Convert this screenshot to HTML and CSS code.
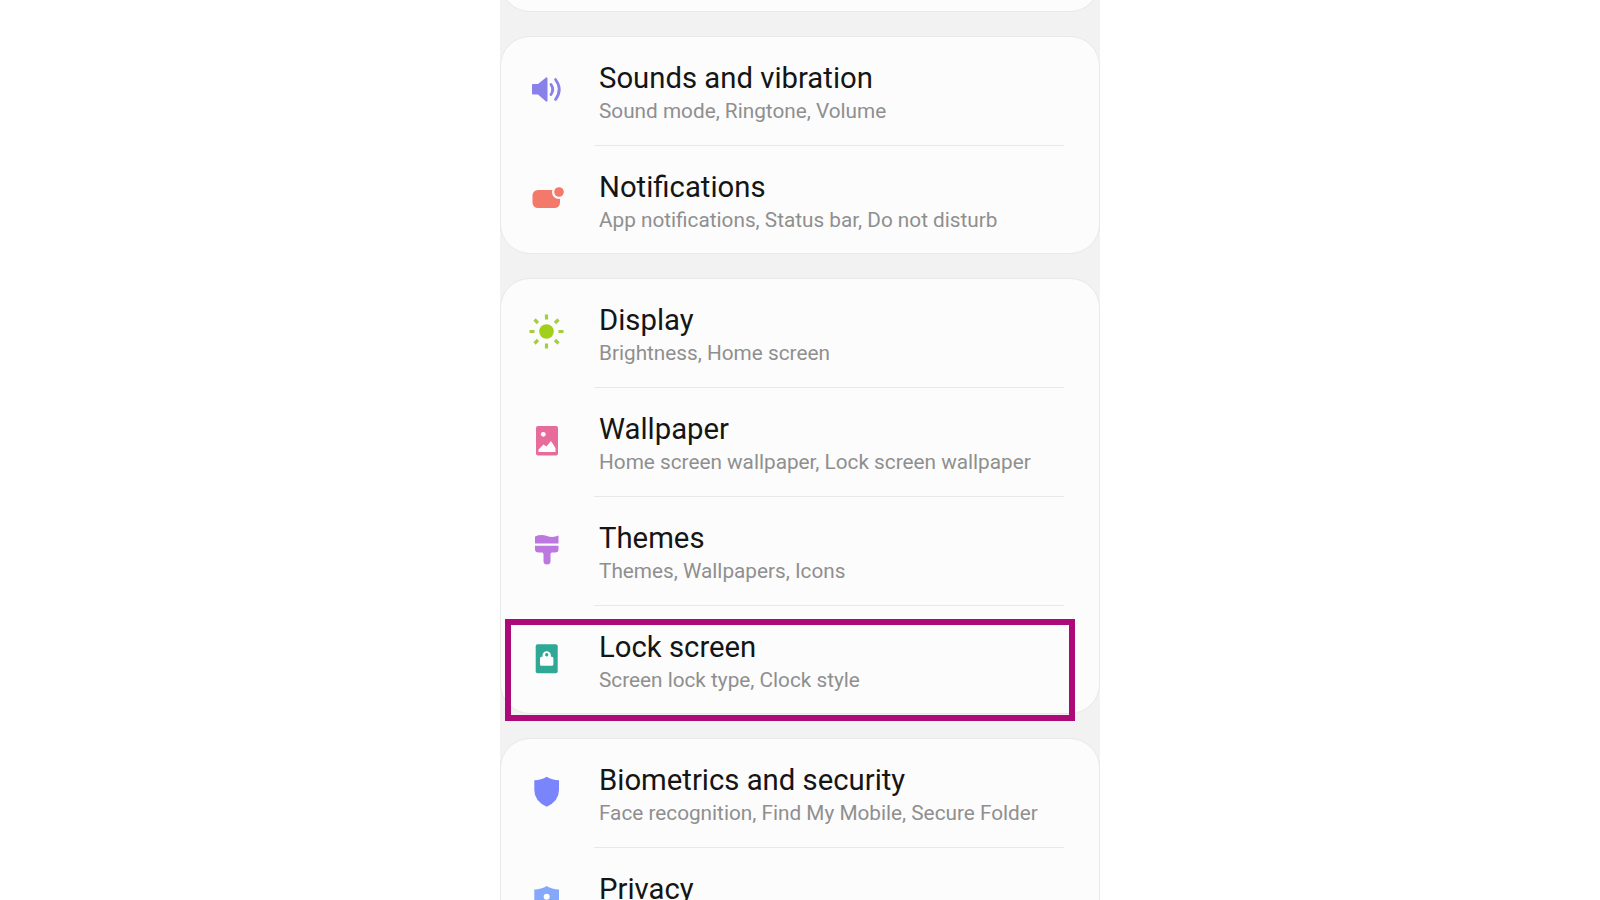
FILE: index.html
```html
<!DOCTYPE html>
<html lang="en">
<head>
<meta charset="utf-8">
<title>Settings</title>
<link rel="stylesheet" href="styles.css">
</head>
<body>
<main class="phone">
  <div class="card card-stub"></div>

  <section class="card">
    <div class="row">
      <svg class="icon" viewBox="0 0 40 40"><path class="sound" d="M6 17a1 1 0 0 1 1-1H12L20 9.500a1 1 0 0 1 1.500 1V32.500a1 1 0 0 1-1.500 1L12 26.500H7a1 1 0 0 1-1-1z"/><path class="wave" d="M25 16.500Q28.500 21.500 25 26.500M29.500 11.500Q37 21.500 29.500 31.500"/></svg>
      <div class="text"><div class="title">Sounds and vibration</div><div class="sub">Sound mode, Ringtone, Volume</div></div>
    </div>
    <div class="divider"></div>
    <div class="row">
      <svg class="icon" viewBox="0 0 40 40"><rect class="notif" x="6.500" y="13" width="27.500" height="18" rx="5.500"/><circle class="cut" cx="33" cy="15" r="7"/><circle class="notif" cx="33" cy="15" r="4.800"/></svg>
      <div class="text"><div class="title">Notifications</div><div class="sub">App notifications, Status bar, Do not disturb</div></div>
    </div>
  </section>

  <section class="card">
    <div class="row">
      <svg class="icon" viewBox="0 0 40 40"><circle class="sun" cx="20.500" cy="21.500" r="7.300"/><g class="ray"><path d="M20.500 4.500v5M20.500 33.500v5M3.500 21.500h5M32.500 21.500h5M8.500 9.500l3.500 3.500M29 30l3.500 3.500M32.500 9.500L29 13M12 30l-3.500 3.500"/></g></svg>
      <div class="text"><div class="title">Display</div><div class="sub">Brightness, Home screen</div></div>
    </div>
    <div class="divider"></div>
    <div class="row">
      <svg class="icon" viewBox="0 0 40 40"><rect class="wall" x="10" y="7" width="22" height="29.500" rx="2"/><circle class="white" cx="17.300" cy="15.300" r="2.400"/><path class="white" d="M12.500 33L12.500 30.500L17.500 25.500L20.500 27.500L25 22L29.500 29V33z"/></svg>
      <div class="text"><div class="title">Wallpaper</div><div class="sub">Home screen wallpaper, Lock screen wallpaper</div></div>
    </div>
    <div class="divider"></div>
    <div class="row">
      <svg class="icon" viewBox="0 0 40 40"><path class="brush" d="M9 8.500Q15 6 21 8T32.500 7.500V15.500H9zM9 17.800H32.500V21.500Q32.500 24.500 29 24.500H26Q24.500 24.500 24.500 26.500L24.500 33A3.500 3.500 0 0 1 17.500 33L17.500 26.500Q17.500 24.500 16 24.500H12.500Q9 24.500 9 21.500z"/></svg>
      <div class="text"><div class="title">Themes</div><div class="sub">Themes, Wallpapers, Icons</div></div>
    </div>
    <div class="divider"></div>
    <div class="row row-marked">
      <svg class="icon" viewBox="0 0 40 40"><rect class="lock" x="9.700" y="7.300" width="22" height="29" rx="2"/><path class="white" d="M15.500 28.700a1.500 1.500 0 0 1-1.500-1.500V21.200a1.500 1.500 0 0 1 1.500-1.500H16.500V18.500a4.200 4.200 0 0 1 8.400 0V19.700H25.900a1.500 1.500 0 0 1 1.500 1.500V27.200a1.500 1.500 0 0 1-1.500 1.500z"/><circle class="lock" cx="20.700" cy="17.800" r="1.700"/></svg>
      <div class="text"><div class="title">Lock screen</div><div class="sub">Screen lock type, Clock style</div></div>
      <div class="highlight"></div>
    </div>
  </section>

  <section class="card">
    <div class="row">
      <svg class="icon" viewBox="0 0 40 40"><path class="shield" d="M20.700 6.700Q26 10 33 10.300V20Q33 31 20.700 36.700Q8.300 31 8.300 20V10.300Q15.500 10 20.700 6.700z"/></svg>
      <div class="text"><div class="title">Biometrics and security</div><div class="sub">Face recognition, Find My Mobile, Secure Folder</div></div>
    </div>
    <div class="divider"></div>
    <div class="row">
      <svg class="icon" viewBox="0 0 40 40"><path class="privacy" d="M20.700 7Q26 10.300 33 10.600V20Q33 31 20.700 37Q8.300 31 8.300 20V10.600Q15.500 10.300 20.700 7z"/><circle class="white" cx="20.700" cy="17.800" r="3"/></svg>
      <div class="text"><div class="title">Privacy</div></div>
    </div>
  </section>
</main>
</body>
</html>
```
FILE: styles.css
```css
html, body {
  margin: 0;
  height: 900px;
  overflow: hidden;
  background: #ffffff;
}
.phone {
  width: 600px;
  height: 900px;
  margin: 0 auto;
  overflow: hidden;
  background: #f2f2f2;
  font-family: Roboto, "Liberation Sans", sans-serif;
  display: flex;
  flex-direction: column;
  gap: 24px;
}
.card {
  flex: none;
  box-sizing: border-box;
  background: #fcfcfc;
  border: 1px solid #e9e9e9;
  border-radius: 30px;
}
.card-stub {
  height: 60px;
  margin-top: -48px;
}
.row {
  position: relative;
  display: flex;
  align-items: flex-start;
  height: 108px;
  padding: 31px 0 0 25px;
  box-sizing: border-box;
  gap: 33px;
}
.row:last-child {
  height: 107px;
}
.text {
  margin-top: -8px;
}
.icon {
  flex: none;
  width: 40px;
  height: 40px;
}
.title {
  font-size: 29.300px;
  line-height: 36px;
  color: #151515;
  white-space: nowrap;
}
.sub {
  font-size: 20.750px;
  line-height: 30px;
  color: #8f8f8f;
  white-space: nowrap;
}
.divider {
  height: 1px;
  margin: 0 35px 0 93px;
  background: #e8e8e8;
}
.highlight {
  position: absolute;
  left: 4px;
  top: 13px;
  width: 558px;
  height: 90px;
  border: 6px solid #ac0a78;
}
.white { fill: #fdfdfd; }
.sound { fill: #8a80ea; }
.wave { fill: none; stroke: #8a80ea; stroke-width: 2.800; stroke-linecap: round; }
.notif { fill: #f3796b; }
.cut { fill: #fcfcfc; }
.sun { fill: #a0d01c; }
.ray path { fill: none; stroke: #a5cf3a; stroke-width: 3.200; }
.wall { fill: #e86c9b; }
.brush { fill: #bd78df; }
.lock { fill: #2fa896; }
.shield { fill: #7a85fb; }
.privacy { fill: #86a8fb; }
```
